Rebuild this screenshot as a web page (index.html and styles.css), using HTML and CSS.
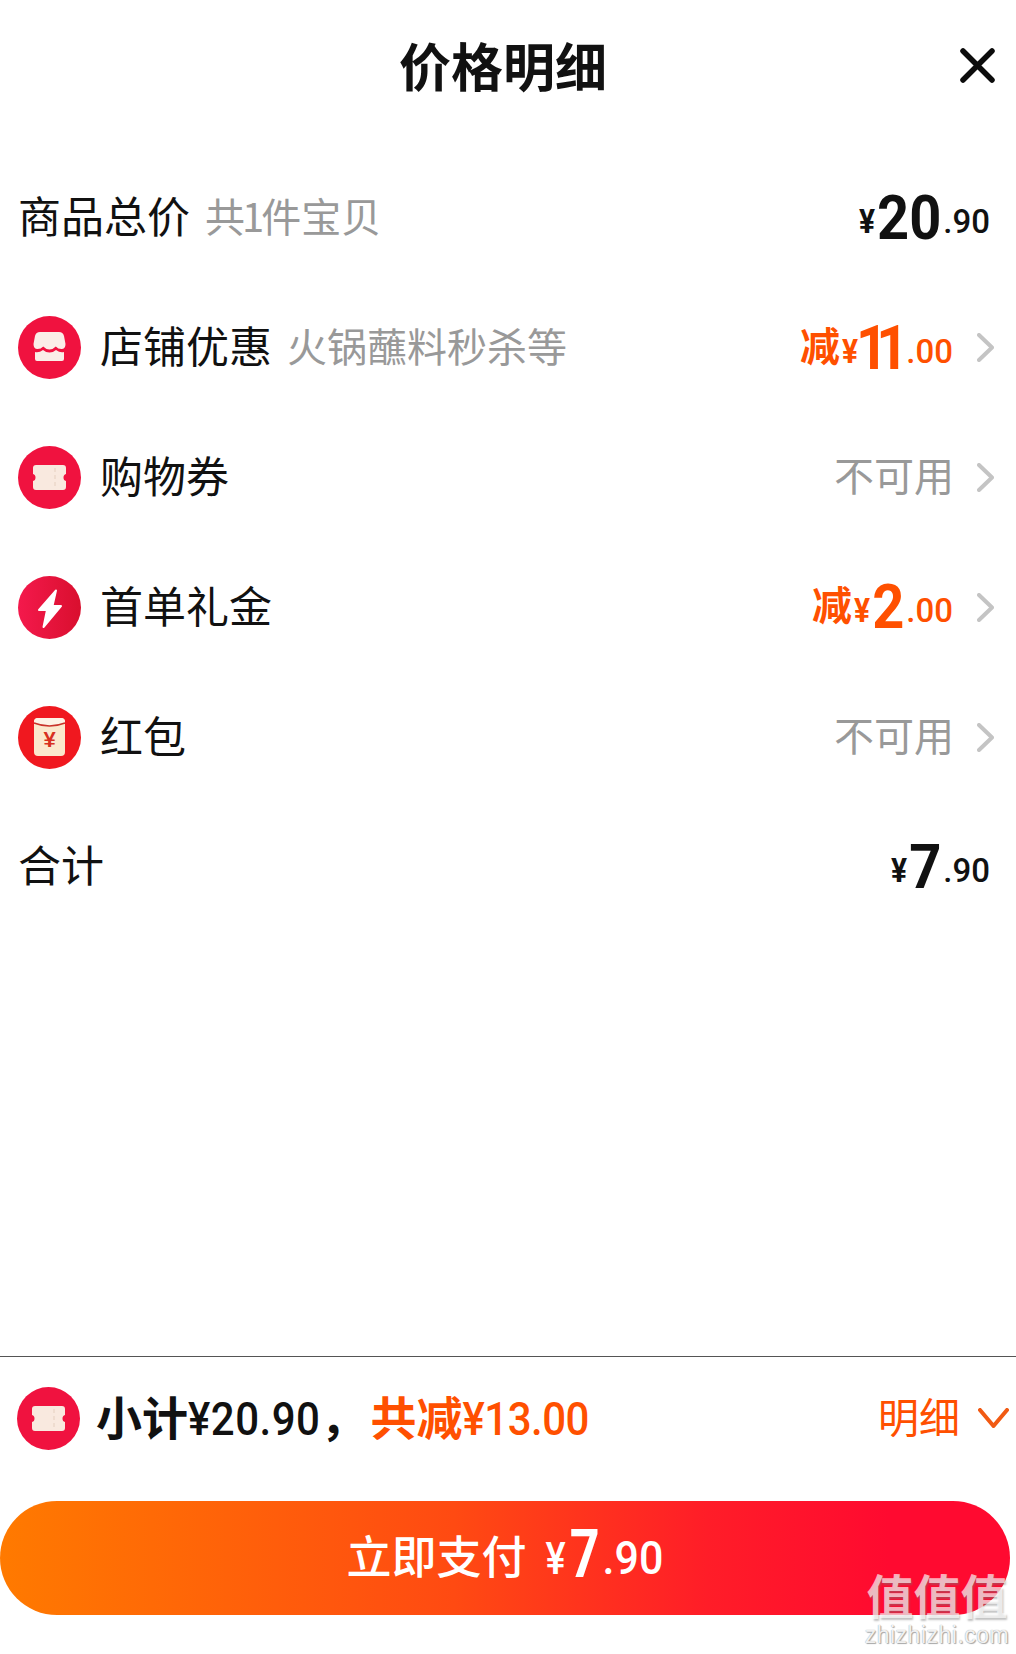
FILE: index.html
```html
<!DOCTYPE html>
<html lang="zh-CN">
<head>
<meta charset="utf-8">
<title>价格明细</title>
<link rel="stylesheet" href="styles.css">
</head>
<body>
<main class="page">
  <header class="header">
    <h1 class="title">价格明细</h1>
    <svg class="close" viewBox="0 0 35 35"><path d="M3 3L32 32M32 3L3 32"/></svg>
  </header>

  <section class="list">
    <div class="row">
      <span class="label">商品总价</span><span class="note">共<span class="one">1</span>件宝贝</span>
      <span class="amount amount-plain"><span class="yen">¥</span><span class="big">20</span><span class="small">.90</span></span>
    </div>
    <div class="row">
      <svg class="icon" viewBox="0 0 63 63">
        <circle cx="31.5" cy="31.5" r="31.5" fill="#f0123f"/>
        <path fill="#fbeee8" d="M22 16H41Q45 16 46 20L47.500 28Q47.500 33 43.500 33Q40 33 37.800 30.500Q35 33.500 31.500 33.500Q28 33.500 25.200 30.500Q23 33 19.500 33Q15.500 33 15.500 28L17 20Q18 16 22 16Z"/>
        <path fill="#fbeee8" d="M17 36Q21 37 25 34Q28 36.500 31.500 36.500Q35 36.500 38 34Q42 37 46 36V43Q46 45 44 45H19Q17 45 17 43Z"/>
      </svg>
      <span class="label">店铺优惠</span><span class="note">火锅蘸料秒杀等</span>
      <span class="amount orange"><span class="jian">减</span><span class="yen">¥</span><span class="big ones">11</span><span class="small">.00</span></span>
      <svg class="chev" viewBox="0 0 17 29"><path d="M2 2L15 14.500L2 27"/></svg>
    </div>
    <div class="row">
      <svg class="icon" viewBox="0 0 63 63">
        <circle cx="31.500" cy="31.500" r="31.500" fill="#f0123f"/>
        <path fill="#f9e9df" d="M18 19H45Q48 19 48 22V28Q45.500 28.500 45.500 31.500Q45.500 34.500 48 35V41Q48 44 45 44H18Q15 44 15 41V35Q17.500 34.500 17.500 31.500Q17.500 28.500 15 28V22Q15 19 18 19Z"/>
        <path class="tick" d="M37 22V41"/>
      </svg>
      <span class="label">购物券</span>
      <span class="amount gray">不可用</span>
      <svg class="chev" viewBox="0 0 17 29"><path d="M2 2L15 14.500L2 27"/></svg>
    </div>
    <div class="row">
      <svg class="icon" viewBox="0 0 63 63">
        <defs><linearGradient id="boltbg" x1="0" x2="1" y1="0" y2="0"><stop offset="0" stop-color="#f4194c"/><stop offset="1" stop-color="#d90f2e"/></linearGradient></defs>
        <circle cx="31.500" cy="31.500" r="31.500" fill="url(#boltbg)"/>
        <path class="bolt" d="M38 14.500L21 34H29L25.500 51L43 30H34.500Z"/>
      </svg>
      <span class="label">首单礼金</span>
      <span class="amount orange"><span class="jian">减</span><span class="yen">¥</span><span class="big">2</span><span class="small">.00</span></span>
      <svg class="chev" viewBox="0 0 17 29"><path d="M2 2L15 14.500L2 27"/></svg>
    </div>
    <div class="row">
      <svg class="icon" viewBox="0 0 63 63">
        <circle cx="31.500" cy="31.500" r="31.500" fill="#f0181f"/>
        <rect x="16" y="12" width="31" height="38" rx="4" fill="#fbe8cc"/>
        <path fill="#fdf3e6" d="M16 16Q16 12 20 12H43Q47 12 47 16V17Q31.500 23 16 17Z"/>
        <path class="flap" d="M16 17Q31.500 23 47 17"/>
        <text class="env-yen" x="31.500" y="41">¥</text>
      </svg>
      <span class="label">红包</span>
      <span class="amount gray">不可用</span>
      <svg class="chev" viewBox="0 0 17 29"><path d="M2 2L15 14.500L2 27"/></svg>
    </div>
    <div class="row">
      <span class="label">合计</span>
      <span class="amount amount-plain"><span class="yen">¥</span><span class="big">7</span><span class="small">.90</span></span>
    </div>
  </section>

  <footer class="footer">
    <div class="summary">
      <svg class="icon" viewBox="0 0 63 63">
        <circle cx="31.500" cy="31.500" r="31.500" fill="#f0123f"/>
        <path fill="#f9e9df" d="M18 19H45Q48 19 48 22V28Q45.500 28.500 45.500 31.500Q45.500 34.500 48 35V41Q48 44 45 44H18Q15 44 15 41V35Q17.500 34.500 17.500 31.500Q17.500 28.500 15 28V22Q15 19 18 19Z"/>
        <path class="tick" d="M37 22V41"/>
      </svg>
      <span class="sum-text">小计<span class="sum-num">¥20.90</span>，</span>
      <span class="sum-text orange sum-off">共减<span class="sum-num">¥13.00</span></span>
      <span class="detail">明细</span>
      <svg class="chev-down" viewBox="0 0 31 20"><path d="M2 2L15.500 18L29 2"/></svg>
    </div>
    <button class="pay" type="button"><span class="pay-label">立即支付</span><span class="pay-yen">¥</span><span class="pay-big">7</span><span class="pay-small">.90</span></button>
  </footer>

  <div class="mark">
    <div class="mark-cn">值值值</div>
    <div class="mark-en">zhizhizhi.com</div>
  </div>
</main>
</body>
</html>
```

FILE: styles.css
```css
* { box-sizing: border-box; }
html, body { margin: 0; padding: 0; background: #fff; }
body { font-family: "Noto Sans CJK SC", "Liberation Sans", sans-serif; color: #111; }

.page {
  position: relative;
  width: 1016px;
  height: 1654px;
  display: flex;
  flex-direction: column;
  overflow: hidden;
}

.header {
  height: 136px;
  display: flex;
  align-items: center;
  padding: 0 21px 0 399px;
}
.title { margin: 0 0 6px; font-size: 52px; line-height: 1; font-weight: 700; }
.close { width: 35px; height: 35px; margin-left: auto; margin-top: -6px; }
.close path { fill: none; stroke: #0c0c0c; stroke-width: 5.500; stroke-linecap: round; }

.list { padding-top: 17px; display: flex; flex-direction: column; }
.row {
  height: 129.800px;
  display: flex;
  align-items: center;
  padding: 0 22px 0 18px;
}
.icon { width: 63px; height: 63px; flex: none; margin-right: 19px; }
.label { font-size: 43px; line-height: 1; color: #111; margin-bottom: 6px; }
.note { font-size: 40px; line-height: 1; color: #999; margin: 0 0 6px 15px; }
.one { margin: 0 -3px; }

.amount {
  margin-left: auto;
  display: flex;
  align-items: baseline;
  font-family: "Roboto", sans-serif;
  line-height: 1;
  margin-top: 4px;
}
.amount-plain { padding-right: 4px; color: #111; }
.orange { color: #ff5000; }
.gray { color: #999; font-family: "Noto Sans CJK SC", sans-serif; font-size: 40px; margin: 0 -3px 6px auto; }
.jian { font-family: "Noto Sans CJK SC", sans-serif; font-size: 40px; font-weight: 700; margin-right: 1px; transform: translateY(-8px); }
.yen, .big, .small { display: inline-block; transform-origin: 50% 84%; }
.yen { font-size: 30px; font-weight: 700; margin: 0 2px 0 1px; transform: translateY(-6px) scaleY(1.08); }
.big { font-size: 56px; font-weight: 700; transform: scaleY(1.1); }
.ones { letter-spacing: -12px; margin: 0 8px 0 -4px; }
.small { font-size: 33px; font-weight: 500; margin-left: 2px; transform: translateY(-6px) scaleY(1.03); }
.orange .small { margin-right: -2px; }

.chev { width: 17px; height: 29px; flex: none; margin-left: 26px; }
.chev path { fill: none; stroke: #c4c4c4; stroke-width: 4; stroke-linecap: round; stroke-linejoin: round; }

.tick { fill: none; stroke: #efdccf; stroke-width: 2; stroke-dasharray: 4 3; }
.bolt { fill: #fff; stroke: #fff; stroke-width: 2; stroke-linejoin: round; }
.flap { fill: none; stroke: #c9332a; stroke-width: 1.500; }
.env-yen { font-family: "Liberation Sans", sans-serif; font-size: 22px; font-weight: 700; fill: #d8301f; text-anchor: middle; }

.footer {
  margin-top: auto;
  border-top: 1px solid #555;
  padding-bottom: 39px;
}
.summary {
  height: 144px;
  display: flex;
  align-items: center;
  padding: 0 7px 22px 17px;
}
.summary .icon { margin-right: 16px; }
.sum-text { font-size: 46px; line-height: 1; font-weight: 700; color: #111; margin-bottom: 2px; }
.sum-text.orange { color: #ff5000; }
.sum-off { margin-left: 4px; }
.sum-num {
  display: inline-block;
  font-family: "Roboto", sans-serif;
  font-weight: 500;
  font-size: 42px;
  letter-spacing: 0.500px;
  transform: scaleY(1.1);
  transform-origin: 50% 84%;
}
.sum-off .sum-num { letter-spacing: -0.500px; }
.detail { margin: 0 0 6px auto; font-size: 41px; line-height: 1; color: #ff5000; }
.chev-down { width: 31px; height: 20px; margin-left: 18px; }
.chev-down path { fill: none; stroke: #f15a13; stroke-width: 4; stroke-linecap: round; stroke-linejoin: round; }

.pay {
  width: 1010px;
  height: 114px;
  border: 0;
  padding: 30px 0 0;
  border-radius: 57px;
  background: linear-gradient(90deg, #ff7a00 0%, #ff4a12 45%, #ff1d28 70%, #ff0a30 88%);
  color: #fff;
  display: flex;
  align-items: baseline;
  justify-content: center;
  font-family: "Roboto", sans-serif;
  font-weight: 500;
  line-height: 1;
}
.pay-label { font-family: "Noto Sans CJK SC", sans-serif; font-size: 45px; font-weight: 500; margin-right: 19px; }
.pay-yen, .pay-big, .pay-small { display: inline-block; transform-origin: 50% 84%; }
.pay-yen { font-size: 38px; margin-right: 4px; transform: scaleY(1.16); }
.pay-big { font-size: 52px; font-weight: 700; transform: translateY(3px) scaleY(1.27); }
.pay-small { font-size: 43px; margin-left: 3px; transform: scaleY(1.08); }

.mark {
  position: absolute;
  left: 862px;
  top: 1566px;
  width: 150px;
  text-align: center;
}
.mark-cn {
  font-size: 47px;
  line-height: 56px;
  font-weight: 700;
  color: rgba(255, 255, 255, 0.68);
  text-shadow: 1px 2px 2px rgba(120, 120, 120, 0.45);
  white-space: nowrap;
}
.mark-en {
  font-family: "Liberation Sans", sans-serif;
  font-size: 23px;
  line-height: 26px;
  letter-spacing: 0.500px;
  color: rgba(255, 255, 255, 0.9);
  text-shadow: 0 0 1px #888, 1px 1px 1px #aaa;
  white-space: nowrap;
}
```
